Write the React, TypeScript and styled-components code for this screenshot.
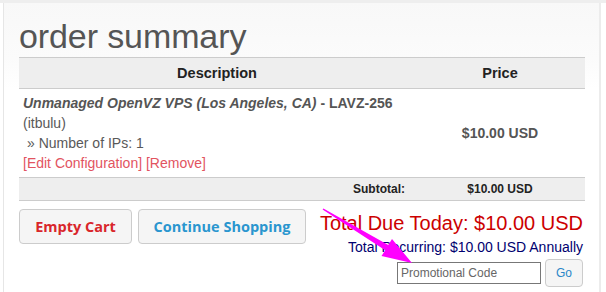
import React from "react";
import styled, { createGlobalStyle } from "styled-components";

const Global = createGlobalStyle`
  html, body { margin: 0; padding: 0; background: #fff; }
  body { font-family: "Liberation Sans", Arial, sans-serif; }
`;

const Page = styled.div`
  position: relative;
  width: 606px;
  height: 292px;
  overflow: hidden;
  border-top: 3px solid #eeeeee;
  box-sizing: border-box;
`;

const Frame = styled.div`
  margin-left: 3px;
  width: 598px;
  height: 100%;
  box-sizing: border-box;
  border-left: 1px solid #e6e6e6;
  border-right: 2px solid #ececec;
  background: linear-gradient(#f8f8f8 0px, #fbfbfb 55px, #ffffff 85px);
  padding: 0 15px 0 15px;
`;

const Title = styled.h1`
  margin: 0;
  padding-top: 15px;
  height: 39px;
  font-size: 34px;
  line-height: 37px;
  font-weight: normal;
  color: #555;
  letter-spacing: -0.1px;
`;

const Table = styled.div`
  width: 566px;
  border-top: 1px solid #cccccc;
`;

const Row = styled.div<{ $bg?: string; $h: number }>`
  display: grid;
  grid-template-columns: 396px 170px;
  height: ${(p) => p.$h}px;
  background: ${(p) => p.$bg || "#fff"};
  border-bottom: 1px solid #cccccc;
  box-sizing: border-box;
`;

const HeadCell = styled.div`
  display: flex;
  align-items: center;
  justify-content: center;
  font-weight: bold;
  font-size: 14.5px;
  color: #222;
`;

const ItemCell = styled.div`
  padding: 4px 4px 0 4px;
  font-size: 14px;
  line-height: 20px;
  color: #595959;
`;

const ItemName = styled.div`
  font-weight: bold;
  color: #555;
  em { font-style: italic; }
`;

const Option = styled.div`
  padding-left: 4px;
`;

const Links = styled.div`
  color: #e2545f;
`;

const PriceCell = styled.div<{ $size: number; $color: string }>`
  display: flex;
  align-items: center;
  justify-content: center;
  font-weight: bold;
  font-size: ${(p) => p.$size}px;
  color: ${(p) => p.$color};
`;

const SubLabel = styled.div`
  display: flex;
  align-items: center;
  justify-content: flex-end;
  padding-right: 10px;
  font-weight: bold;
  font-size: 12px;
  color: #222;
`;

const Bottom = styled.div`
  width: 566px;
  display: flex;
  justify-content: space-between;
  margin-top: 8px;
`;

const Buttons = styled.div`
  display: flex;
  gap: 6px;
  align-items: flex-start;
`;

const Button = styled.button<{ $color: string; $w: number }>`
  width: ${(p) => p.$w}px;
  height: 35px;
  background: #f5f5f5;
  border: 1px solid #cccccc;
  border-radius: 4px;
  font-family: "Open Sans", "DejaVu Sans", sans-serif;
  font-weight: 700;
  font-size: 14.5px;
  color: ${(p) => p.$color};
  padding: 0;
  cursor: pointer;
`;

const Totals = styled.div`
  display: flex;
  flex-direction: column;
  align-items: flex-end;
  padding-right: 2px;
`;

const DueToday = styled.div`
  font-size: 20px;
  line-height: 24px;
  margin-top: 2px;
  color: #cc0000;
`;

const Recurring = styled.div`
  font-size: 14px;
  line-height: 18px;
  margin-top: 3px;
  color: #000070;
`;

const PromoForm = styled.div`
  display: flex;
  align-items: center;
  gap: 4px;
  margin-top: 3px;
`;

const PromoInput = styled.input`
  width: 144px;
  height: 22px;
  box-sizing: border-box;
  border: 1px solid #777;
  padding: 0 3px;
  font-family: "Liberation Sans", Arial, sans-serif;
  font-size: 12px;
  color: #666;
  background: #fff;
  &::placeholder { color: #666; }
`;

const GoButton = styled.button`
  width: 38px;
  height: 28px;
  background: #f5f5f5;
  border: 1px solid #cccccc;
  border-radius: 4px;
  font-family: "Liberation Sans", Arial, sans-serif;
  font-size: 12px;
  color: #2a86c8;
  padding: 0;
`;

const Arrow = styled.svg`
  position: absolute;
  left: 0;
  top: -3px;
  pointer-events: none;
`;

export default function App() {
  return (
    <>
      <Global />
      <Page>
        <Frame>
          <Title>order summary</Title>
          <Table>
            <Row $bg="#eeeeee" $h={31}>
              <HeadCell>Description</HeadCell>
              <HeadCell>Price</HeadCell>
            </Row>
            <Row $h={89}>
              <ItemCell>
                <ItemName>
                  <em>Unmanaged OpenVZ VPS (Los Angeles, CA)</em> - LAVZ-256
                </ItemName>
                <div>(itbulu)</div>
                <Option>» Number of IPs: 1</Option>
                <Links>[Edit Configuration] [Remove]</Links>
              </ItemCell>
              <PriceCell $size={14} $color="#555">$10.00 USD</PriceCell>
            </Row>
            <Row $bg="#eeeeee" $h={23}>
              <SubLabel>Subtotal:</SubLabel>
              <PriceCell $size={12} $color="#222">$10.00 USD</PriceCell>
            </Row>
          </Table>
          <Bottom>
            <Buttons>
              <Button $color="#d9262b" $w={113}>Empty Cart</Button>
              <Button $color="#2a96cf" $w={168}>Continue Shopping</Button>
            </Buttons>
            <Totals>
              <DueToday>Total Due Today: $10.00 USD</DueToday>
              <Recurring>Total Recurring: $10.00 USD Annually</Recurring>
              <PromoForm>
                <PromoInput placeholder="Promotional Code" />
                <GoButton>Go</GoButton>
              </PromoForm>
            </Totals>
          </Bottom>
        </Frame>
        <Arrow width="606" height="292" viewBox="0 0 606 292">
          <polygon
            points="322.6,209.6 323.4,208.4 388.3,245.1 392,239 412,263 381.5,256 385.2,250.3"
            fill="#ff00ff"
          />
        </Arrow>
      </Page>
    </>
  );
}
